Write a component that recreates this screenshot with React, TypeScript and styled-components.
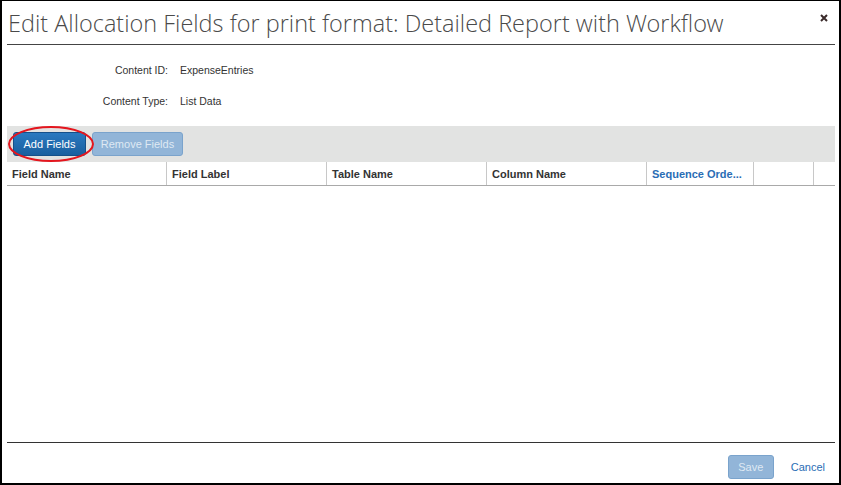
import React from "react";
import styled, { createGlobalStyle } from "styled-components";

const GlobalStyle = createGlobalStyle`
  html, body { margin: 0; padding: 0; background: #fff; }
  * { box-sizing: border-box; }
`;

const Dialog = styled.div`
  width: 841px;
  height: 485px;
  border: 2px solid #000;
  border-top-width: 1px;
  padding: 0 4px 0 5px;
  display: flex;
  flex-direction: column;
  font-family: Arial, "Liberation Sans", sans-serif;
  background: #fff;
`;

const TitleBar = styled.div`
  height: 44px;
  border-bottom: 1px solid #444;
  display: flex;
  align-items: flex-start;
  justify-content: space-between;
`;

const Title = styled.h1`
  margin: 0;
  padding: 5px 0 0 1px;
  font-family: "Open Sans Light", "Open Sans", sans-serif;
  font-weight: 300;
  font-size: 23.5px;
  line-height: 34px;
  color: #4a4a4a;
  white-space: nowrap;
`;

const CloseButton = styled.button`
  border: 0;
  background: none;
  padding: 0;
  margin: 12px 6px 0 0;
  width: 10px;
  height: 10px;
  display: flex;
  align-items: center;
  justify-content: center;
  cursor: pointer;
`;

const Info = styled.div`
  display: grid;
  grid-template-columns: 161px 1fr;
  column-gap: 12px;
  row-gap: 18px;
  padding-top: 19px;
  font-size: 10.5px;
  line-height: 13px;
  color: #333;
`;

const InfoLabel = styled.div`
  text-align: right;
`;

const InfoValue = styled.div``;

const Toolbar = styled.div`
  margin-top: 18px;
  height: 36px;
  background: #e2e3e2;
  display: flex;
  align-items: center;
  gap: 6px;
  padding: 0 6px;
  position: relative;
`;

const Button = styled.button<{ $primary?: boolean; $width: number }>`
  width: ${(p) => p.$width}px;
  height: 24px;
  padding: 0;
  border-radius: 3px;
  font-family: Arial, "Liberation Sans", sans-serif;
  font-size: 11px;
  border: 1px solid ${(p) => (p.$primary ? "#15508a" : "#7aa3cc")};
  background: ${(p) =>
    p.$primary ? "linear-gradient(#2a79c0, #1a5f9f)" : "#92b5d8"};
  color: ${(p) => (p.$primary ? "#fff" : "#dfe9f3")};
  cursor: pointer;
`;

const Highlight = styled.div`
  position: absolute;
  left: 1px;
  top: 0px;
  width: 86px;
  height: 36px;
  border: 2px solid #e4161e;
  border-radius: 50%;
  pointer-events: none;
`;

const HeaderRow = styled.div`
  display: grid;
  grid-template-columns: 159px 160px 160px 160px 107px 60px 1fr;
  height: 24px;
  border-bottom: 1px solid #a9a9a9;
`;

const HeaderCell = styled.div<{ $sorted?: boolean; $first?: boolean }>`
  display: flex;
  align-items: center;
  padding: 1px 0 0 5px;
  border-left: ${(p) => (p.$first ? "0" : "1px solid #c8c8c8")};
  font-size: 11px;
  font-weight: bold;
  color: ${(p) => (p.$sorted ? "#2a6db5" : "#333")};
  white-space: nowrap;
  overflow: hidden;
`;

const TableBody = styled.div`
  flex: 1;
  border-bottom: 1px solid #333;
`;

const Footer = styled.div`
  height: 40px;
  display: flex;
  align-items: center;
  justify-content: flex-end;
  gap: 17px;
  padding: 7px 10px 0 0;
`;

const LinkButton = styled.button`
  border: 0;
  background: none;
  padding: 0;
  font-family: Arial, "Liberation Sans", sans-serif;
  font-size: 11px;
  color: #2a6db5;
  cursor: pointer;
`;

const columns = [
  { name: "Field Name" },
  { name: "Field Label" },
  { name: "Table Name" },
  { name: "Column Name" },
  { name: "Sequence Orde...", sorted: true },
  { name: "" },
  { name: "" },
];

export default function App() {
  return (
    <>
      <GlobalStyle />
      <Dialog>
        <TitleBar>
          <Title>Edit Allocation Fields for print format: Detailed Report with Workflow</Title>
          <CloseButton aria-label="Close">
            <svg width="8" height="8" viewBox="0 0 8 8">
              <path d="M1 1 L7 7 M7 1 L1 7" stroke="#3a2a2a" strokeWidth="2" />
            </svg>
          </CloseButton>
        </TitleBar>
        <Info>
          <InfoLabel>Content ID:</InfoLabel>
          <InfoValue>ExpenseEntries</InfoValue>
          <InfoLabel>Content Type:</InfoLabel>
          <InfoValue>List Data</InfoValue>
        </Info>
        <Toolbar>
          <Button $primary $width={73}>Add Fields</Button>
          <Button $width={91}>Remove Fields</Button>
          <Highlight />
        </Toolbar>
        <HeaderRow>
          {columns.map((c, i) => (
            <HeaderCell key={i} $first={i === 0} $sorted={c.sorted}>
              {c.name}
            </HeaderCell>
          ))}
        </HeaderRow>
        <TableBody />
        <Footer>
          <Button $width={46}>Save</Button>
          <LinkButton>Cancel</LinkButton>
        </Footer>
      </Dialog>
    </>
  );
}
